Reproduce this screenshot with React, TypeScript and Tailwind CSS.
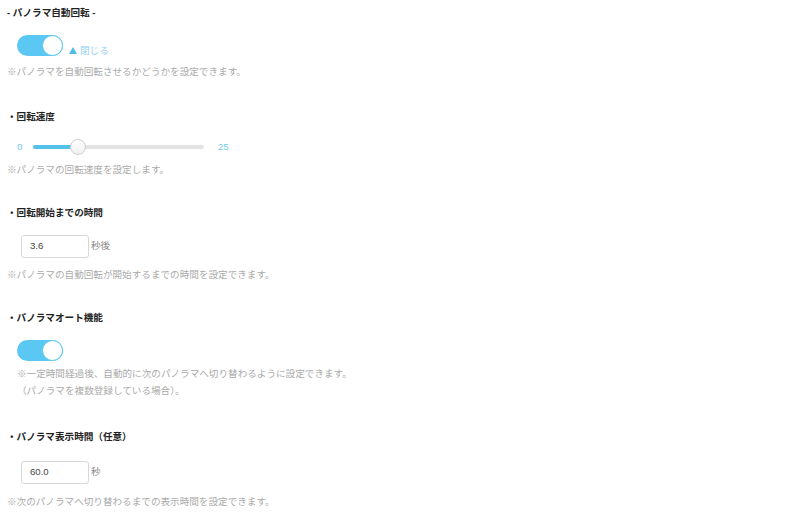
import React from "react";

const font = "font-['Liberation_Sans','Noto_Sans_CJK_JP',sans-serif]";

const Heading = ({ children }: { children: React.ReactNode }) => (
  <div className="h-[14px] text-[9.6px] leading-[14px] font-bold text-[#222]">{children}</div>
);

const Note = ({ children, className = "" }: { children: React.ReactNode; className?: string }) => (
  <div className={`text-[9.6px] leading-[14px] text-[#aaa] ${className}`}>{children}</div>
);

const Toggle = () => (
  <div className="relative h-[21px] w-[46px] rounded-full bg-[#5ac8f2]">
    <div className="absolute right-0 top-0 h-[21px] w-[21px] rounded-full border border-[#5ac8f2] bg-white" />
  </div>
);

const NumberBox = ({ value, suffix }: { value: string; suffix: string }) => (
  <div className="flex items-center">
    <div className="flex h-[23px] w-[68px] items-center rounded-[3px] border border-[#d8d8d8] bg-white pl-[8px] text-[9.6px] text-[#444]">
      {value}
    </div>
    <span className="ml-[2px] text-[9.6px] text-[#888]">{suffix}</span>
  </div>
);

const App = () => {
  return (
    <div className={`min-h-[521px] w-[800px] bg-white pl-[7px] pt-[6px] ${font}`}>
      <Heading>- パノラマ自動回転 -</Heading>

      <div className="mt-[15px] ml-[10px] flex h-[21px] items-center">
        <Toggle />
        <div className="ml-[6px] flex translate-y-[5px] items-center">
          <svg width="8" height="7" viewBox="0 0 8 7">
            <path d="M4 0 L8 7 L0 7 Z" fill="#4fbbe9" />
          </svg>
          <span className="ml-[3px] text-[9.6px] leading-[14px] text-[#93d2ef]">閉じる</span>
        </div>
      </div>
      <Note className="mt-[9px]">※パノラマを自動回転させるかどうかを設定できます。</Note>

      <div className="mt-[31px]">
        <Heading>・回転速度</Heading>
      </div>
      <div className="mt-[15px] ml-[10px] flex h-[16px] items-center text-[9.6px] text-[#72c9ef]">
        <span className="w-[16px]">0</span>
        <div className="relative h-[4px] w-[171px] rounded-full bg-[#e4e4e4]">
          <div className="h-[4px] w-[45px] rounded-full bg-[#55c1eb]" />
          <div className="absolute left-[37px] top-[-6px] h-[16px] w-[16px] rounded-full border border-[#cfcfcf] bg-gradient-to-b from-white to-[#f0f0f0]" />
        </div>
        <span className="ml-[14px]">25</span>
      </div>
      <Note className="mt-[8px]">※パノラマの回転速度を設定します。</Note>

      <div className="mt-[29px]">
        <Heading>・回転開始までの時間</Heading>
      </div>
      <div className="mt-[15px] ml-[14px]">
        <NumberBox value="3.6" suffix="秒後" />
      </div>
      <Note className="mt-[10px]">※パノラマの自動回転が開始するまでの時間を設定できます。</Note>

      <div className="mt-[29px]">
        <Heading>・パノラマオート機能</Heading>
      </div>
      <div className="mt-[15px] ml-[10px]">
        <Toggle />
      </div>
      <div className="mt-[4px] ml-[10px] text-[9.6px] leading-[17px] text-[#aaa]">
        <div>※一定時間経過後、自動的に次のパノラマへ切り替わるように設定できます。</div>
        <div>（パノラマを複数登録している場合）。</div>
      </div>

      <div className="mt-[31px]">
        <Heading>・パノラマ表示時間（任意）</Heading>
      </div>
      <div className="mt-[17px] ml-[14px]">
        <NumberBox value="60.0" suffix="秒" />
      </div>
      <Note className="mt-[11px]">※次のパノラマへ切り替わるまでの表示時間を設定できます。</Note>
    </div>
  );
};

export default App;
